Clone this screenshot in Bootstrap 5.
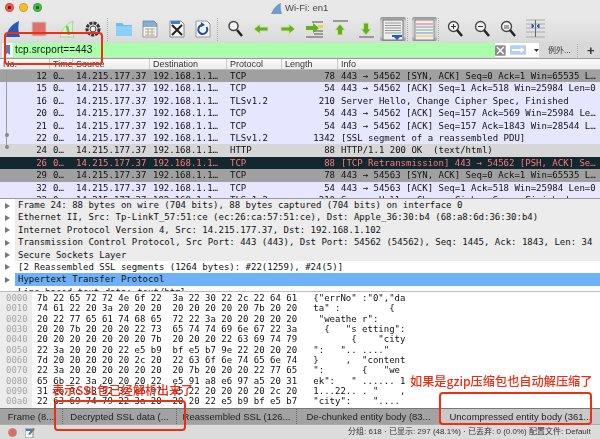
<!DOCTYPE html>
<html lang="zh"><head><meta charset="utf-8"><title>Wi-Fi: en1</title>
<link href="https://cdn.jsdelivr.net/npm/bootstrap@5.3.0/dist/css/bootstrap.min.css" rel="stylesheet">
<style>
html,body{margin:0;width:600px;height:439px;overflow:hidden;background:#fff}
.app{width:600px;height:439px;font-family:"Liberation Sans",sans-serif;color:#222;position:relative}
.blurwrap{width:600px;height:439px;filter:blur(.3px)}
.titlebar{height:17px;background:#e8e8e8;position:relative}
.light{width:9px;height:9px;border-radius:50%;border:1px solid rgba(0,0,0,.15)}
.lt-r{background:radial-gradient(circle,#7a1a16 0 1.5px,#f2574e 2px)}
.lt-y{background:#f7bb2e}
.lt-g{background:radial-gradient(circle,#1d6a1a 0 1.5px,#4cb848 2px)}
.lights{padding-left:5px;gap:5px;height:15px}
.wintitle{font-size:9.500px;color:#444;gap:3px;position:absolute;left:271px;top:1px}
.toolrow{height:25px;background:linear-gradient(#e8e8e8,#dadada)}
.tool{width:26.4px;height:24px;flex:none}
.tool.on{background:linear-gradient(#8f8f8f,#cfcfcf 18%,#cfcfcf 80%,#8f8f8f);border-radius:2px}
.tool.nar{width:25px}
.tsep{width:5.2px;height:24px;flex:none;position:relative}
.tsep.wd{width:6px}
.tsep::after{content:"";position:absolute;left:1px;top:1px;bottom:0;border-left:1px dotted #aaa}
.filterbar{height:17px;background:#d8d8d8;padding:1px 0 1px 2px;border-bottom:1px solid #999}
.filterinput{width:537px;height:14px;background:#aaffa9;border-radius:2px;position:relative;font-size:10px;line-height:14px;letter-spacing:.15px;color:#111}
.bookmark{width:11px;height:14px;background:#f6f6f6;margin-right:2px;flex:none}
.fend{margin-left:auto;height:14px;background:#fff;width:44px}
.exc{font-family:"Noto Sans CJK SC",sans-serif;font-size:8px;color:#333;margin-left:9px;width:29px;line-height:14px}
.plus{font-size:13px;font-weight:700;color:#333;border-left:1px dotted #aaa;padding-left:9px;line-height:13px}
.pk-head{height:11px;background:linear-gradient(#fbfbfb,#ececec);border-bottom:1px solid #bbb;font-size:9px;line-height:11px;color:#333}
.pk-grid{display:grid;grid-template-columns:50px 23px 77px 77px 55px 56px 1fr}
.pk-head>span{border-right:1px solid #ccc;padding-left:3px;white-space:nowrap;overflow:hidden}
.pk-head>span:last-child{border:0}
.pklist{height:129px;overflow:hidden;position:relative;background:#e7e6ff;border-bottom:1px solid #999}
.pk{height:12.42px;font-family:"DejaVu Sans Mono",monospace;font-size:9px;line-height:12.42px;color:#111;white-space:pre}
.pk>span{padding-left:3px;overflow:hidden}
.pk>.r{text-align:right;padding:0 3px 0 0}
.pk.g{background:#a0a0a0}.pk.l{background:#d6d6d6}
.pk.k{background:#12272e;color:#ff7a78}
.pline{position:absolute;left:6px;top:0;height:76px;border-left:1px solid #999}
.pdot{position:absolute;left:4.5px;width:4px;height:4px;border-radius:50%;background:#888}
.d1{top:63px}.d2{top:75px}
.tree{height:93px;overflow:hidden;font-family:"DejaVu Sans Mono",monospace;font-size:9px;color:#111;background:#fff;border-bottom:1px solid #bbb}
.tr{height:12.4px;line-height:12.4px;white-space:pre;position:relative;margin-left:15px;padding-left:3px;background:#ececec}
.tr.w{background:#fff}.tr.s{background:#6fb1f7}
.tr::before{content:"";position:absolute;left:-10px;top:3.5px;border-left:5px solid #777;border-top:3px solid transparent;border-bottom:3px solid transparent}
.tr.n::before{display:none}
.hex{height:116px;overflow:hidden;background:#fff;font-family:"DejaVu Sans Mono",monospace;font-size:9px;line-height:10.35px;white-space:pre;color:#111;padding-top:1px}
.hexo{width:32px;background:#ececec;color:#a5a5a5;padding-left:6px;flex:none;margin-top:-1px;padding-top:1px}
.hexb{padding-left:5px}
.tabsrow{height:16px;background:#a2a2a2;border-top:1px solid #777;font-size:9.500px;line-height:15px;color:#222}
.tb{white-space:nowrap;border-right:1px dotted #666;flex:none;text-align:center;height:15px}
.tw1{width:63px}.tw2{width:114px}.tw3{width:120px}.tw4{width:144px}
.tb.on{background:#c9c9c9;border:0;flex:1 1 auto}
.statusrow{height:15px;background:#dcdcdc;border-top:1px solid #aaa;font-size:8px;line-height:14px;font-family:"Liberation Sans","Noto Sans CJK SC",sans-serif;color:#333;position:relative}
.recdot{width:9px;height:9px;border-radius:50%;background:#e8665f;border:1px solid #999;margin-left:8px}
.stxt{position:absolute;left:348px;top:0;white-space:pre}
.sprof{position:absolute;left:529px;top:0;white-space:pre}
.redbox{position:absolute;border:2px solid #ee2f12;border-radius:4px}
.rb1{left:4px;top:32px;width:99px;height:33px}
.rb2{left:54px;top:400px;width:132px;height:31px}
.rb3{left:439px;top:392px;width:153px;height:33px}
.note{position:absolute;color:#f02a10;font-family:"Noto Sans CJK SC",sans-serif;font-weight:500;white-space:nowrap;line-height:1}
.n1{left:52px;top:384px;font-size:12px}
.n2{left:410px;top:375px;font-size:12.200px}
</style></head>
<body>
<div class="app"><div class="blurwrap">
<div class="titlebar">
 <div class="d-flex align-items-center lights"><span class="light lt-r"></span><span class="light lt-y"></span><span class="light lt-g"></span></div>
 <div class="wintitle d-flex align-items-center"><svg width="11" height="11" viewBox="0 0 11 11"><path d="M0 11C2 6 5 2 10 0c-1 4 0 8 1 11z" fill="#6f9cc9"/></svg>Wi-Fi: en1</div>
</div>
<div class="toolrow d-flex">
 <div class="tool"><svg width="26" height="24" viewBox="0 0 26 24"><path d="M6 19C7 12 12 6 19 3c-1 5-1 11 1 16z" fill="#2a56b8"/></svg></div>
 <div class="tool"><svg width="26" height="24" viewBox="0 0 26 24"><rect x="6" y="4" width="14" height="14" fill="#e0706c" stroke="#cfcfcf"/></svg></div>
 <div class="tool"><svg width="26" height="24" viewBox="0 0 26 24"><path d="M7 19C8 12 13 6 20 3c-1 5-1 11 1 16z" fill="#dcefd6" stroke="#a5d4a0"/><path d="M14 8l2 9" stroke="#62d048" stroke-width="2.500"/></svg></div>
 <div class="tool"><svg width="26" height="24" viewBox="0 0 26 24"><circle cx="14" cy="11" r="6" fill="none" stroke="#333" stroke-width="3" stroke-dasharray="3 1"/><circle cx="14" cy="11" r="3" fill="#eee" stroke="#444"/></svg></div>
 <div class="tsep"></div>
 <div class="tool"><svg width="26" height="24" viewBox="0 0 26 24"><path d="M5 5h6l2 2h8v11H5z" fill="#6bbcef"/><path d="M5 8h16v10H5z" fill="#8bd0f7"/></svg></div>
 <div class="tool"><svg width="26" height="24" viewBox="0 0 26 24"><path d="M6 3h11l3 3v13H6z" fill="#f4f4ef" stroke="#999"/><path d="M6 3h11l3 3v3H6z" fill="#3f7ec0" opacity=".6"/><path d="M8 11h10M8 14h10M8 17h10M11 10v8M15 10v8" stroke="#b8b090"/></svg></div>
 <div class="tool"><svg width="26" height="24" viewBox="0 0 26 24"><path d="M6 3h11l3 3v13H6z" fill="#f4f4f4" stroke="#888"/><path d="M7 3h9v3H7z" fill="#3f7ec0"/><path d="M8 7l10 10M18 7L8 17" stroke="#222" stroke-width="2"/></svg></div>
 <div class="tool"><svg width="26" height="24" viewBox="0 0 26 24"><path d="M6 3h11l3 3v13H6z" fill="#f4f4f4" stroke="#999"/><path d="M16.500 9a4.500 4.500 0 1 1-4-2" fill="none" stroke="#1f4f9c" stroke-width="2"/><path d="M11 4l4 3-4 2z" fill="#1f4f9c"/></svg></div>
 <div class="tsep"></div>
 <div class="tool"><svg width="26" height="24" viewBox="0 0 26 24"><circle cx="11.500" cy="8" r="4.500" fill="#f2f2f2" stroke="#444" stroke-width="1.500"/><path d="M15 12l5 6" stroke="#222" stroke-width="2.500"/></svg></div>
 <div class="tool"><svg width="26" height="24" viewBox="0 0 26 24"><path d="M6 11l6-5v3h8v4h-8v3z" fill="#62b01e" stroke="#cbe0a5"/></svg></div>
 <div class="tool"><svg width="26" height="24" viewBox="0 0 26 24"><path d="M21 11l-6-5v3H7v4h8v3z" fill="#62b01e" stroke="#cbe0a5"/></svg></div>
 <div class="tool"><svg width="26" height="24" viewBox="0 0 26 24"><path d="M11 4h11M13 16h9M5 19h17M13 13h9" stroke="#555"/><path d="M5 8h7V5l6 5-6 5v-3H5z" fill="#62b01e"/><rect x="17" y="7" width="5" height="3" fill="#ecd24a"/></svg></div>
 <div class="tool"><svg width="26" height="24" viewBox="0 0 26 24"><path d="M6 3h15" stroke="#999" stroke-width="2"/><path d="M13 6l5 6h-2.500v5h-5v-5H8z" fill="#62b01e" stroke="#cbe0a5"/></svg></div>
 <div class="tool"><svg width="26" height="24" viewBox="0 0 26 24"><path d="M6 19h15" stroke="#999" stroke-width="2"/><path d="M13 17l5-6h-2.500V5h-5v6H8z" fill="#62b01e" stroke="#cbe0a5"/></svg></div>
 <div class="tool on"><svg width="26" height="24" viewBox="0 0 26 24"><path d="M3 2h20v20H3z" fill="#eee" stroke="#777"/><path d="M5 5h16M5 7.500h16M5 10h16M5 12.500h16M5 15h16" stroke="#999"/><path d="M12 17h10v2h-2l-3 3-3-3h-2z" fill="#2460b0"/></svg></div>
 <div class="tsep wd"></div>
 <div class="tool on nar"><svg width="25" height="24" viewBox="0 0 25 24"><path d="M3 2h19v20H3z" fill="#eee" stroke="#888"/><path d="M4 6h17" stroke="#e86a5a"/><path d="M4 9h17" stroke="#7a8fd8"/><path d="M4 12h17" stroke="#67c36a"/><path d="M4 15h17" stroke="#7a8fd8"/><path d="M4 18h17" stroke="#e5c848"/></svg></div>
 <div class="tsep"></div>
 <div class="tool"><svg width="26" height="24" viewBox="0 0 26 24"><circle cx="11.500" cy="8.500" r="5" fill="#f2f2f2" stroke="#444" stroke-width="1.300"/><path d="M15 12l5 6" stroke="#222" stroke-width="2.500"/><path d="M9 8.500h5M11.500 6v5" stroke="#333"/></svg></div>
 <div class="tool"><svg width="26" height="24" viewBox="0 0 26 24"><circle cx="11.500" cy="8.500" r="5" fill="#f2f2f2" stroke="#444" stroke-width="1.300"/><path d="M15 12l5 6" stroke="#222" stroke-width="2.500"/><path d="M9 8.500h5" stroke="#333"/></svg></div>
 <div class="tool"><svg width="26" height="24" viewBox="0 0 26 24"><circle cx="11.500" cy="8.500" r="5" fill="#f2f2f2" stroke="#444" stroke-width="1.300"/><path d="M15 12l5 6" stroke="#222" stroke-width="2.500"/><path d="M9 8h5M9 10h5" stroke="#555"/></svg></div>
 <div class="tool"><svg width="26" height="24" viewBox="0 0 26 24"><path d="M4 2h19M4 19h19M4 6h19M4 10h19M4 14h19" stroke="#aaa"/><path d="M13.500 2v17" stroke="#666"/><path d="M10 6l2 2-2 2zM17 6l-2 2 2 2z" fill="#2460b0" stroke="#2460b0"/></svg></div>
</div>
<div class="filterbar d-flex align-items-center">
 <div class="filterinput d-flex flex-grow-0">
  <div class="bookmark d-flex align-items-center justify-content-center"><svg width="5" height="10" viewBox="0 0 5 10"><path d="M0 0h5v10L2.500 8 0 10z" fill="#5a7fa8"/></svg></div>
  <span class="flex-grow-1">tcp.srcport==443</span>
  <div class="fend d-flex align-items-center">
   <svg width="11" height="11" viewBox="0 0 11 11"><rect width="11" height="11" fill="#8a8a8a" rx="1"/><path d="M2 2l7 7M9 2L2 9" stroke="#fff" stroke-width="1.500"/></svg>
   <svg width="17" height="10" viewBox="0 0 17 10" class="ms-1"><rect width="17" height="10" rx="1" fill="#b5cfee"/><path d="M2 4h9V2l4 3-4 3V6H2z" fill="#fff"/></svg>
   <svg width="5" height="3" viewBox="0 0 5 3" class="ms-2"><path d="M0 0h5L2.500 3z" fill="#333"/></svg>
  </div>
 </div>
 <div class="exc">例外...</div>
 <div class="plus">+</div>
</div>
<div class="pk-head pk-grid"><span>No.</span><span>Time</span><span>Source</span><span>Destination</span><span>Protocol</span><span>Length</span><span>Info</span></div>
<div class="pklist">
 <div class="pk pk-grid g"><span class="r">12</span><span>0…</span><span>14.215.177.37</span><span>192.168.1.1…</span><span>TCP</span><span class="r">78</span><span>443 → 54562 [SYN, ACK] Seq=0 Ack=1 Win=65535 L…</span></div>
 <div class="pk pk-grid"><span class="r">15</span><span>0…</span><span>14.215.177.37</span><span>192.168.1.1…</span><span>TCP</span><span class="r">54</span><span>443 → 54562 [ACK] Seq=1 Ack=518 Win=25984 Len=0</span></div>
 <div class="pk pk-grid"><span class="r">16</span><span>0…</span><span>14.215.177.37</span><span>192.168.1.1…</span><span>TLSv1.2</span><span class="r">210</span><span>Server Hello, Change Cipher Spec, Finished</span></div>
 <div class="pk pk-grid"><span class="r">20</span><span>0…</span><span>14.215.177.37</span><span>192.168.1.1…</span><span>TCP</span><span class="r">54</span><span>443 → 54562 [ACK] Seq=157 Ack=569 Win=25984 Le…</span></div>
 <div class="pk pk-grid"><span class="r">21</span><span>0…</span><span>14.215.177.37</span><span>192.168.1.1…</span><span>TCP</span><span class="r">54</span><span>443 → 54562 [ACK] Seq=157 Ack=1843 Win=28544 L…</span></div>
 <div class="pk pk-grid"><span class="r">22</span><span>0…</span><span>14.215.177.37</span><span>192.168.1.1…</span><span>TLSv1.2</span><span class="r">1342</span><span>[SSL segment of a reassembled PDU]</span></div>
 <div class="pk pk-grid l"><span class="r">24</span><span>0…</span><span>14.215.177.37</span><span>192.168.1.1…</span><span>HTTP</span><span class="r">88</span><span>HTTP/1.1 200 OK  (text/html)</span></div>
 <div class="pk pk-grid k"><span class="r">26</span><span>0…</span><span>14.215.177.37</span><span>192.168.1.1…</span><span>TCP</span><span class="r">88</span><span>[TCP Retransmission] 443 → 54562 [PSH, ACK] Se…</span></div>
 <div class="pk pk-grid g"><span class="r">29</span><span>0…</span><span>14.215.177.37</span><span>192.168.1.1…</span><span>TCP</span><span class="r">78</span><span>443 → 54563 [SYN, ACK] Seq=0 Ack=1 Win=65535 L…</span></div>
 <div class="pk pk-grid"><span class="r">32</span><span>0…</span><span>14.215.177.37</span><span>192.168.1.1…</span><span>TCP</span><span class="r">54</span><span>443 → 54563 [ACK] Seq=1 Ack=518 Win=25984 Len=0</span></div>
 <div class="pk pk-grid"><span class="r">33</span><span>0…</span><span>14.215.177.37</span><span>192.168.1.1…</span><span>TLSv1.2</span><span class="r">210</span><span>Server Hello, Change Cipher Spec, Finished</span></div>
 <span class="pline"></span><span class="pdot d1"></span><span class="pdot d2"></span>
</div>
<div class="tree">
 <div class="tr">Frame 24: 88 bytes on wire (704 bits), 88 bytes captured (704 bits) on interface 0</div>
 <div class="tr">Ethernet II, Src: Tp-LinkT_57:51:ce (ec:26:ca:57:51:ce), Dst: Apple_36:30:b4 (68:a8:6d:36:30:b4)</div>
 <div class="tr">Internet Protocol Version 4, Src: 14.215.177.37, Dst: 192.168.1.102</div>
 <div class="tr">Transmission Control Protocol, Src Port: 443 (443), Dst Port: 54562 (54562), Seq: 1445, Ack: 1843, Len: 34</div>
 <div class="tr">Secure Sockets Layer</div>
 <div class="tr w">[2 Reassembled SSL segments (1264 bytes): #22(1259), #24(5)]</div>
 <div class="tr s">Hypertext Transfer Protocol</div>
 <div class="tr w n">Line-based text data: text/html</div>
</div>
<div class="hex d-flex">
<div class="hexo">0000
0010
0020
0030
0040
0050
0060
0070
0080
0090
00a0</div>
<div class="hexb">7b 22 65 72 72 4e 6f 22  3a 22 30 22 2c 22 64 61   {"errNo" :"0","da
74 61 22 20 3a 20 20 20  20 20 20 20 20 7b 20 20   ta" :         {
20 22 77 65 61 74 68 65  72 22 3a 20 20 20 20 20    "weathe r":
20 20 7b 20 20 20 22 73  65 74 74 69 6e 67 22 3a     {   "s etting":
20 20 20 20 20 20 20 7b  20 20 20 22 63 69 74 79          {    "city
22 3a 20 20 20 22 e5 b9  bf e5 b7 9e 22 20 20 20   ":   ".. ...."
7d 20 20 20 20 20 2c 20  22 63 6f 6e 74 65 6e 74   }     ,  "content
22 3a 20 20 20 20 20 20  20 7b 20 20 20 22 77 65   ":       {   "we
65 6b 22 3a 20 20 20 22  e5 91 a8 e6 97 a5 20 31   ek":   " ...... 1
31 e6 9c 88 32 32 e6 97  a5 22 20 20 20 20 2c 20   1...22.. . "    ,
22 63 69 74 79 22 3a 20  20 20 22 e5 b9 bf e5 b7   "city":    "....</div>
</div>
<div class="tabsrow d-flex">
 <div class="tb tw1">Frame (8...</div>
 <div class="tb tw2">Decrypted SSL data (...</div>
 <div class="tb tw3">Reassembled SSL (126...</div>
 <div class="tb tw4">De-chunked entity body (83...</div>
 <div class="tb on">Uncompressed entity body (361...</div>
</div>
<div class="statusrow d-flex align-items-center">
 <span class="recdot"></span>
 <svg class="ms-2" width="10" height="11" viewBox="0 0 10 11"><path d="M0 2h8v9H0z" fill="#f5f5f5" stroke="#888"/><path d="M1 3h6" stroke="#3f7ec0" stroke-width="2"/><path d="M3 7l5-6 2 1-5 6z" fill="#777"/></svg>
 <span class="stxt">分组: 618 · 已显示: 297 (48.1%) · 已丢弃: 0 (0.0%)</span>
 <span class="sprof">配置文件: Default</span>
</div>
</div>
<div class="redbox rb1"></div><div class="redbox rb2"></div><div class="redbox rb3"></div>
<div class="note n1">表示SSL包已经解析出来了</div>
<div class="note n2">如果是gzip压缩包也自动解压缩了</div>
</div>
<script src="https://cdn.jsdelivr.net/npm/bootstrap@5.3.0/dist/js/bootstrap.bundle.min.js"></script>
</body></html>
